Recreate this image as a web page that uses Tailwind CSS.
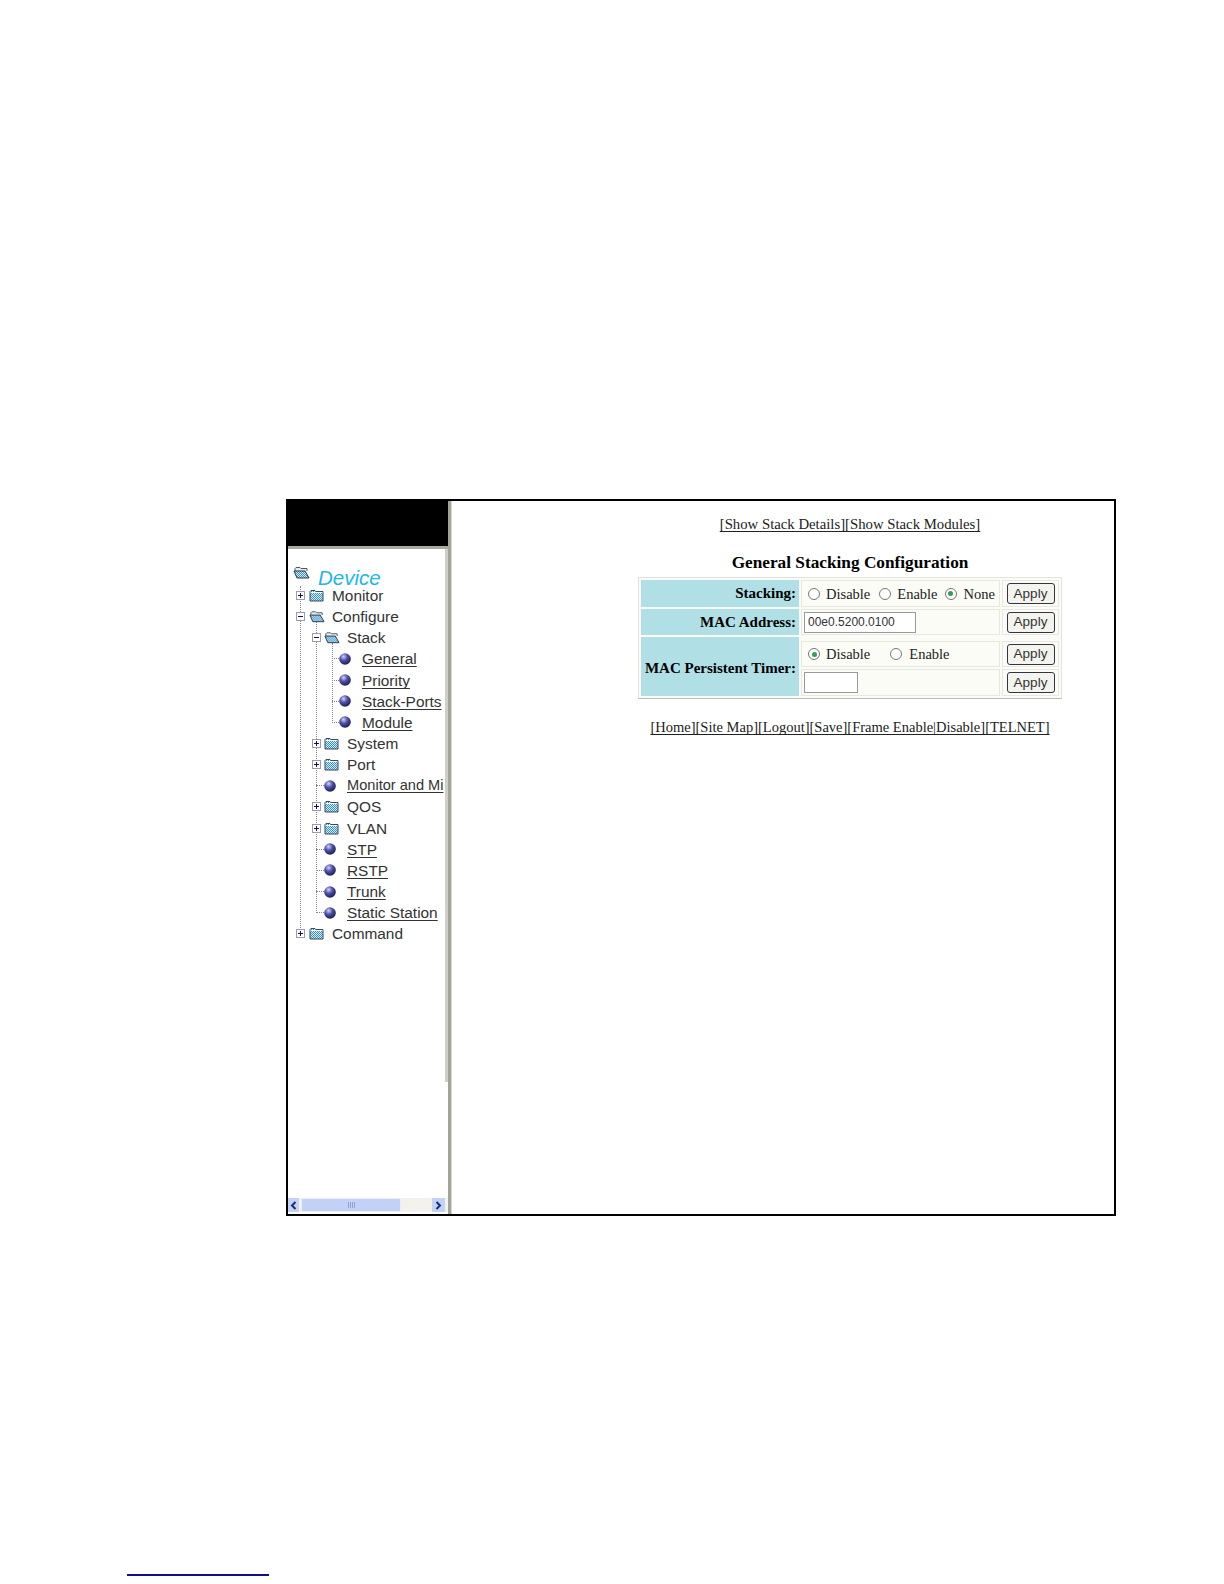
<!DOCTYPE html>
<html lang="en">
<head>
  <meta charset="UTF-8" />
  <title>General Stacking Configuration</title>
  <script src="https://cdn.jsdelivr.net/npm/@tailwindcss/browser@4"></script>
</head>
<body class="bg-white w-[1224px] h-[1584px] overflow-hidden font-['Liberation_Serif',serif] text-[#222]">
  <!-- shared icon defs, kept out of flow (display:none would kill the gradients) -->
  <svg class="absolute w-0 h-0">
    <defs>
      <radialGradient id="ball" cx="0.38" cy="0.3" r="0.8">
        <stop offset="0" stop-color="#d4d4f4" />
        <stop offset="0.4" stop-color="#5252b0" />
        <stop offset="1" stop-color="#101034" />
      </radialGradient>
      <pattern id="dither" width="2" height="2" patternUnits="userSpaceOnUse">
        <rect width="2" height="2" fill="#d0eefc" />
        <rect width="1" height="1" fill="#3a90d0" />
        <rect x="1" y="1" width="1" height="1" fill="#3a90d0" />
      </pattern>
      <symbol id="bullet" viewBox="0 0 12 12"><circle cx="6" cy="6" r="5.8" fill="url(#ball)" /></symbol>
      <symbol id="folder" viewBox="0 0 15 13">
        <path d="M1 12V2.500L2 1.500H6L7 2.500H14V12Z" fill="url(#dither)" stroke="#3a4a50" />
        <path d="M1.500 3.500H13.500" stroke="#f4f8f8" />
      </symbol>
      <symbol id="folder-open" viewBox="0 0 17 13">
        <path d="M2 5V2.500L3 1.500H7L8 2.500H14V5" fill="#e4ecec" stroke="#4a5a60" />
        <path d="M1 5H12L16 12H4Z" fill="url(#dither)" stroke="#2c383c" />
      </symbol>
      <symbol id="plus" viewBox="0 0 9 9"><rect x="0.500" y="0.500" width="8" height="8" fill="#fff" stroke="#9a9ab0" /><path d="M2 4.500H7M4.500 2V7" stroke="#101060" /></symbol>
      <symbol id="minus" viewBox="0 0 9 9"><rect x="0.500" y="0.500" width="8" height="8" fill="#fff" stroke="#9a9ab0" /><path d="M2 4.500H7" stroke="#101060" /></symbol>
    </defs>
  </svg>

  <!-- main screenshot frame -->
  <div class="ml-[286px] mt-[499px] w-[830px] h-[717px] border-2 border-black flex">
    <!-- tree -->
    <div class="w-[160px] shrink-0 flex flex-col font-['Liberation_Sans',sans-serif] text-[15.4px] text-[#333]">
      <div class="h-[45px] shrink-0 bg-black"></div>
      <div class="h-[3px] shrink-0 bg-[#a9a9a0]"></div>
      <div class="flex-1 flex min-h-0">
        <div class="relative flex-1 min-w-0 overflow-hidden pt-[19px] [&_a]:underline [&_a]:underline-offset-2 [&_a]:[text-decoration-skip-ink:none]">
          <div class="absolute left-[12px] top-[37px] h-[348px] border-l border-dotted border-[#888]"></div>
          <div class="absolute left-[28px] top-[73px] h-[291px] border-l border-dotted border-[#888]"></div>
          <div class="absolute left-[44px] top-[94px] h-[80px] border-l border-dotted border-[#888]"></div>

          <div class="h-[21px] flex items-center pl-[5px] gap-[8px] text-[20.5px] italic text-[#22b5ea] leading-none">
            <svg class="w-[17px] h-[13px] -mt-[12px] shrink-0"><use href="#folder-open" /></svg><span>Device</span>
          </div>
          <div class="h-[21.15px] flex items-center pl-[8px] -mt-[4px]">
            <svg class="w-[9px] h-[9px] relative"><use href="#plus" /></svg><svg class="w-[15px] h-[13px] ml-[4px] relative"><use href="#folder" /></svg><span class="ml-[8px]">Monitor</span>
          </div>
          <div class="h-[21.15px] flex items-center pl-[8px]">
            <svg class="w-[9px] h-[9px] relative"><use href="#minus" /></svg><svg class="w-[16px] h-[13px] ml-[4px] relative"><use href="#folder-open" /></svg><span class="ml-[7px]">Configure</span>
          </div>
          <div class="h-[21.15px] flex items-center pl-[24px]">
            <svg class="w-[9px] h-[9px] relative"><use href="#minus" /></svg><svg class="w-[16px] h-[13px] ml-[3px] relative"><use href="#folder-open" /></svg><span class="ml-[7px]">Stack</span>
          </div>
          <div class="h-[21.15px] flex items-center pl-[44px]">
            <span class="w-[7px] shrink-0 border-t border-dotted border-[#888]"></span><svg class="w-[12px] h-[12px] shrink-0"><use href="#bullet" /></svg><a class="ml-[11px]">General</a>
          </div>
          <div class="h-[21.15px] flex items-center pl-[44px]">
            <span class="w-[7px] shrink-0 border-t border-dotted border-[#888]"></span><svg class="w-[12px] h-[12px] shrink-0"><use href="#bullet" /></svg><a class="ml-[11px]">Priority</a>
          </div>
          <div class="h-[21.15px] flex items-center pl-[44px]">
            <span class="w-[7px] shrink-0 border-t border-dotted border-[#888]"></span><svg class="w-[12px] h-[12px] shrink-0"><use href="#bullet" /></svg><a class="ml-[11px] whitespace-nowrap">Stack-Ports</a>
          </div>
          <div class="h-[21.15px] flex items-center pl-[44px]">
            <span class="w-[7px] shrink-0 border-t border-dotted border-[#888]"></span><svg class="w-[12px] h-[12px] shrink-0"><use href="#bullet" /></svg><a class="ml-[11px]">Module</a>
          </div>
          <div class="h-[21.15px] flex items-center pl-[24px]">
            <svg class="w-[9px] h-[9px] relative"><use href="#plus" /></svg><svg class="w-[15px] h-[13px] ml-[3px] relative"><use href="#folder" /></svg><span class="ml-[8px]">System</span>
          </div>
          <div class="h-[21.15px] flex items-center pl-[24px]">
            <svg class="w-[9px] h-[9px] relative"><use href="#plus" /></svg><svg class="w-[15px] h-[13px] ml-[3px] relative"><use href="#folder" /></svg><span class="ml-[8px]">Port</span>
          </div>
          <div class="h-[21.15px] flex items-center pl-[28px] whitespace-nowrap">
            <span class="w-[8px] shrink-0 border-t border-dotted border-[#888]"></span><svg class="w-[12px] h-[12px] shrink-0"><use href="#bullet" /></svg><a class="ml-[11px] text-[14.6px]">Monitor and Mi</a>
          </div>
          <div class="h-[21.15px] flex items-center pl-[24px]">
            <svg class="w-[9px] h-[9px] relative"><use href="#plus" /></svg><svg class="w-[15px] h-[13px] ml-[3px] relative"><use href="#folder" /></svg><span class="ml-[8px]">QOS</span>
          </div>
          <div class="h-[21.15px] flex items-center pl-[24px]">
            <svg class="w-[9px] h-[9px] relative"><use href="#plus" /></svg><svg class="w-[15px] h-[13px] ml-[3px] relative"><use href="#folder" /></svg><span class="ml-[8px]">VLAN</span>
          </div>
          <div class="h-[21.15px] flex items-center pl-[28px]">
            <span class="w-[8px] shrink-0 border-t border-dotted border-[#888]"></span><svg class="w-[12px] h-[12px] shrink-0"><use href="#bullet" /></svg><a class="ml-[11px]">STP</a>
          </div>
          <div class="h-[21.15px] flex items-center pl-[28px]">
            <span class="w-[8px] shrink-0 border-t border-dotted border-[#888]"></span><svg class="w-[12px] h-[12px] shrink-0"><use href="#bullet" /></svg><a class="ml-[11px]">RSTP</a>
          </div>
          <div class="h-[21.15px] flex items-center pl-[28px]">
            <span class="w-[8px] shrink-0 border-t border-dotted border-[#888]"></span><svg class="w-[12px] h-[12px] shrink-0"><use href="#bullet" /></svg><a class="ml-[11px]">Trunk</a>
          </div>
          <div class="h-[21.15px] flex items-center pl-[28px]">
            <span class="w-[8px] shrink-0 border-t border-dotted border-[#888]"></span><svg class="w-[12px] h-[12px] shrink-0"><use href="#bullet" /></svg><a class="ml-[11px] whitespace-nowrap">Static Station</a>
          </div>
          <div class="h-[21.15px] flex items-center pl-[8px]">
            <svg class="w-[9px] h-[9px] relative"><use href="#plus" /></svg><svg class="w-[15px] h-[13px] ml-[4px] relative"><use href="#folder" /></svg><span class="ml-[8px]">Command</span>
          </div>
        </div>
        <!-- sliver of the vertical scrollbar -->
        <div class="w-[3px] h-[533px] bg-[#cfcfc8] shrink-0"></div>
      </div>
      <!-- horizontal scrollbar -->
      <div class="h-[14px] mb-[2px] shrink-0 flex items-center bg-[#f3f2ec]">
        <div class="w-[11px] h-[14px] bg-[#c3d3f5] flex items-center justify-center">
          <svg class="w-[7px] h-[9px]" viewBox="0 0 7 9" fill="none" stroke="#1a2a80" stroke-width="2"><path d="M5.500 1L2 4.500L5.500 8" /></svg>
        </div>
        <div class="ml-[2px] w-[100px] h-[14px] bg-[#c1d2f6] border border-[#e8eefc] flex items-center justify-center gap-px">
          <span class="w-px h-[6px] bg-[#8fa2d4]"></span><span class="w-px h-[6px] bg-[#8fa2d4]"></span><span class="w-px h-[6px] bg-[#8fa2d4]"></span><span class="w-px h-[6px] bg-[#8fa2d4]"></span>
        </div>
        <div class="ml-auto mr-[3px] w-[13px] h-[14px] bg-[#c3d3f5] flex items-center justify-center">
          <svg class="w-[7px] h-[9px]" viewBox="0 0 7 9" fill="none" stroke="#1a2a80" stroke-width="2"><path d="M1.500 1L5 4.500L1.500 8" /></svg>
        </div>
      </div>
    </div>
    <!-- divider -->
    <div class="w-[4px] shrink-0 bg-[#a3a398] border-r border-[#d8d8d0]"></div>
    <!-- content -->
    <div class="flex-1 flex flex-col items-center pl-[134px]">
      <a class="mt-[14px] text-[14.75px] leading-[18px] underline underline-offset-2 [text-decoration-skip-ink:none] whitespace-nowrap">[Show Stack Details][Show Stack Modules]</a>
      <h1 class="mt-[19px] font-bold text-[17.25px] leading-[22px] text-black whitespace-nowrap">General Stacking Configuration</h1>
      <div class="mt-[3px] w-[424px] border border-[#e4e4dc] border-b-[#bbb] p-[2px] grid grid-cols-[158px_199px_1fr] gap-[2px] text-[14.5px] bg-[#fcfcf6]">
        <div class="bg-[#b0e0e6] h-[27px] flex items-center justify-end pr-[3px] font-bold text-[15px] text-black">Stacking:</div>
        <div class="border border-[#e8e8e0] h-[27px] flex items-center pl-[6px] whitespace-nowrap">
          <span class="w-[12px] h-[12px] rounded-full border border-[#777] bg-white"></span><span class="ml-[6px] mt-[2px]">Disable</span>
          <span class="ml-[9px] w-[12px] h-[12px] rounded-full border border-[#777] bg-white"></span><span class="ml-[6px] mt-[2px]">Enable</span>
          <span class="ml-[7px] w-[12px] h-[12px] rounded-full border border-[#777] bg-white flex items-center justify-center"><span class="w-[5px] h-[5px] rounded-full bg-[#3a9a5a]"></span></span><span class="ml-[7px] mt-[2px]">None</span>
        </div>
        <div class="border border-[#e8e8e0] h-[27px] flex items-center justify-center">
          <button class="w-[48px] h-[21px] rounded-[3px] border border-[#334] bg-[#f4f4ee] font-['Liberation_Sans',sans-serif] text-[13.5px] leading-none text-[#333]">Apply</button>
        </div>

        <div class="bg-[#b0e0e6] h-[26px] flex items-center justify-end pr-[3px] font-bold text-[15px] text-black">MAC Address:</div>
        <div class="border border-[#e8e8e0] h-[26px] flex items-center pl-[2px]">
          <div class="w-[112px] h-[21px] border border-[#999] bg-white px-[3px] font-['Liberation_Sans',sans-serif] text-[12px] leading-[19px] text-[#333]">00e0.5200.0100</div>
        </div>
        <div class="border border-[#e8e8e0] h-[26px] flex items-center justify-center">
          <button class="w-[48px] h-[21px] rounded-[3px] border border-[#334] bg-[#f4f4ee] font-['Liberation_Sans',sans-serif] text-[13.5px] leading-none text-[#333]">Apply</button>
        </div>

        <div class="bg-[#b0e0e6] row-span-2 flex items-center justify-end pr-[3px] pt-[3px] font-bold text-[15px] text-black whitespace-nowrap">MAC Persistent Timer:</div>
        <div class="mt-[4px] border border-[#e8e8e0] h-[26px] flex items-center pl-[6px]">
          <span class="w-[12px] h-[12px] rounded-full border border-[#777] bg-white flex items-center justify-center"><span class="w-[5px] h-[5px] rounded-full bg-[#3a9a5a]"></span></span><span class="ml-[6px] mt-[2px]">Disable</span>
          <span class="ml-[20px] w-[12px] h-[12px] rounded-full border border-[#777] bg-white"></span><span class="ml-[7px] mt-[2px]">Enable</span>
        </div>
        <div class="mt-[4px] border border-[#e8e8e0] h-[26px] flex items-center justify-center">
          <button class="w-[48px] h-[21px] rounded-[3px] border border-[#334] bg-[#f4f4ee] font-['Liberation_Sans',sans-serif] text-[13.5px] leading-none text-[#333]">Apply</button>
        </div>
        <div class="border border-[#e8e8e0] h-[27px] flex items-center pl-[2px]">
          <div class="w-[54px] h-[21px] border border-[#999] bg-white"></div>
        </div>
        <div class="border border-[#e8e8e0] h-[27px] flex items-center justify-center">
          <button class="w-[48px] h-[21px] rounded-[3px] border border-[#334] bg-[#f4f4ee] font-['Liberation_Sans',sans-serif] text-[13.5px] leading-none text-[#333]">Apply</button>
        </div>
      </div>
      <a class="mt-[19px] text-[14.5px] leading-[18px] underline underline-offset-2 [text-decoration-skip-ink:none] whitespace-nowrap">[Home][Site Map][Logout][Save][Frame Enable|Disable][TELNET]</a>
    </div>
  </div>

  <!-- footnote rule -->
  <div class="ml-[127px] mt-[358px] w-[142px] h-[2px] bg-[#10108a]"></div>
</body>
</html>
